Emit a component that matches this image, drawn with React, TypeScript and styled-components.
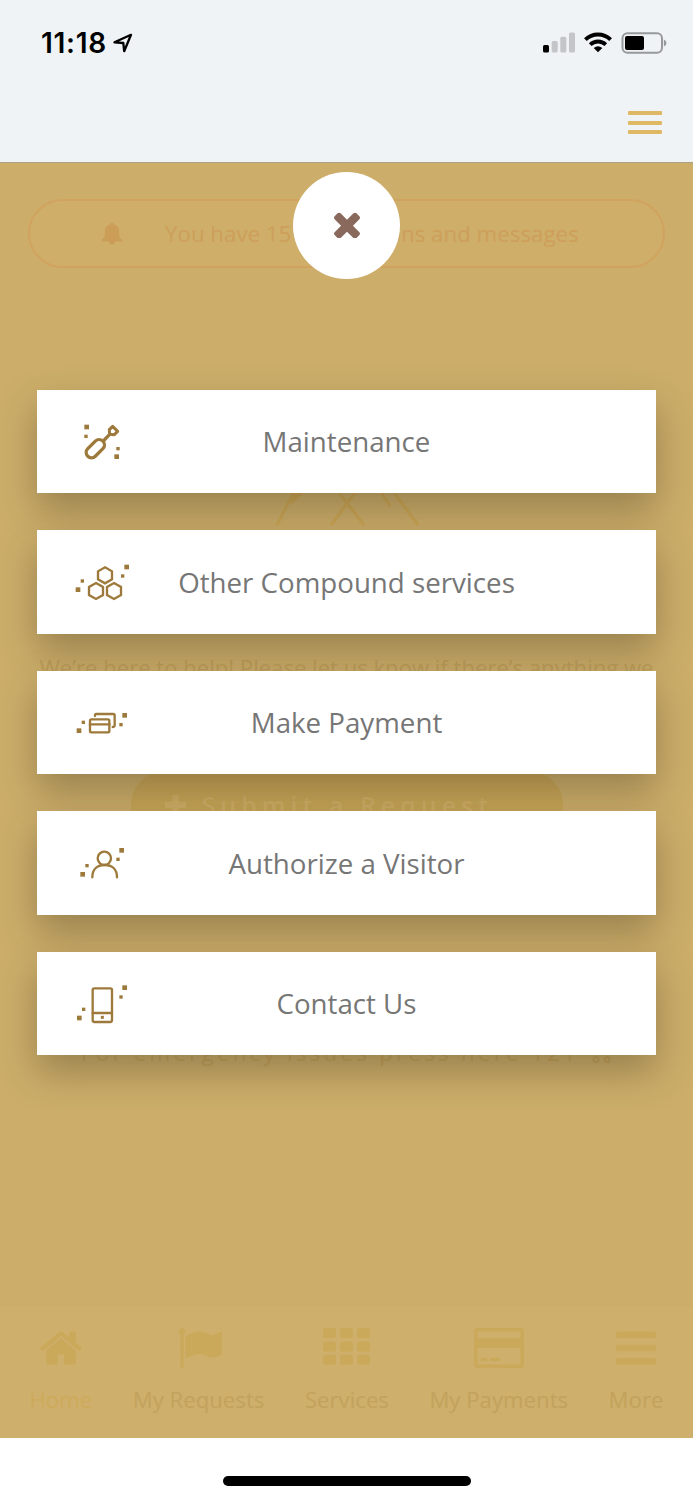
import React from "react";
import styled, { createGlobalStyle } from "styled-components";

const GlobalStyle = createGlobalStyle`
  * { box-sizing: border-box; }
  body { margin: 0; background: #fff; }
`;

const sans = `"Open Sans", "Noto Sans", sans-serif`;

const Screen = styled.div`
  width: 693px;
  height: 1500px;
  display: flex;
  flex-direction: column;
  overflow: hidden;
  background: #fff;
  font-family: ${sans};
`;

const Header = styled.header`
  height: 163px;
  flex: none;
  display: flex;
  flex-direction: column;
  background: #eff3f6;
  border-bottom: 1px solid #aca084;
`;

const StatusBar = styled.div`
  height: 84px;
  display: flex;
  align-items: center;
  padding: 1px 26px 0 41px;
`;

const Clock = styled.span`
  font: 600 28px/34px Inter, sans-serif;
  color: #000;
  letter-spacing: 0.7px;
  margin-right: 6px;
`;

const StatusIcons = styled.div`
  margin-left: auto;
  display: flex;
  align-items: center;
  gap: 9px;
`;

const MenuButton = styled.button`
  align-self: flex-end;
  margin: 27px 31px 0 0;
  padding: 0;
  width: 34px;
  height: 23px;
  border: 0;
  background: none;
  display: flex;
  flex-direction: column;
  justify-content: space-between;
`;

const MenuLine = styled.span`
  height: 4px;
  border-radius: 1px;
  background: #dfb863;
`;

const Stage = styled.main`
  flex: none;
  height: 1275px;
  display: grid;
  background: #ccae6a;
`;

const Layer = styled.div`
  grid-area: 1 / 1;
  min-width: 0;
  display: flex;
  flex-direction: column;
  align-items: center;
`;

const MenuLayer = styled(Layer)`
  z-index: 1;
  padding-top: 9px;
`;

const Notice = styled.div`
  margin-top: 36px;
  width: 637px;
  height: 69px;
  flex: none;
  display: flex;
  align-items: center;
  padding-left: 71px;
  border: 2px solid #d1a35e;
  border-radius: 35px;
  background: #ceae69;
  color: #cd9f5a;
  font-size: 22.3px;
  white-space: nowrap;
`;

const NoticeText = styled.span`
  margin-left: 42px;
`;

const Emblem = styled.svg`
  margin-top: 222px;
  flex: none;
`;

const HelpText = styled.p`
  margin: 126px 0 0;
  line-height: 30px;
  font-size: 22.1px;
  white-space: nowrap;
  color: #bf9f5a;
`;

const RequestButton = styled.div`
  margin-top: 89px;
  width: 432px;
  height: 68px;
  flex: none;
  display: flex;
  align-items: center;
  padding-left: 34px;
  gap: 16px;
  border-radius: 34px;
  background: #c8a657;
  color: #d0af66;
  font-size: 25px;
  font-weight: 600;
  letter-spacing: 5px;
  white-space: nowrap;
`;

const Emergency = styled.div`
  width: 531px;
  margin-top: 198px;
  height: 32px;
  display: flex;
  align-items: center;
  justify-content: space-between;
  line-height: 32px;
  font-size: 22.2px;
  letter-spacing: 3.3px;
  white-space: nowrap;
  color: #c3a158;
`;

const TabBar = styled.nav`
  margin-top: auto;
  width: 100%;
  height: 131px;
  flex: none;
  display: flex;
  justify-content: space-between;
  padding: 18px 29.5px 0;
  background: #ceaf6b;
`;

const Tab = styled.div<{ $active?: boolean }>`
  display: flex;
  flex-direction: column;
  align-items: center;
  font-size: 22.2px;
  line-height: 30px;
  white-space: nowrap;
  color: ${(p) => (p.$active ? "#cdab5b" : "#c3a25d")};
`;

const TabIcon = styled.svg`
  height: 46px;
  margin-bottom: 14px;
  fill: #cba95b;
`;

const CloseButton = styled.button`
  width: 107px;
  height: 107px;
  flex: none;
  padding: 0 0 1px;
  display: flex;
  align-items: center;
  justify-content: center;
  border: 0;
  border-radius: 50%;
  background: #fff;
`;

const Options = styled.div`
  margin-top: 111px;
  width: 619px;
  display: flex;
  flex-direction: column;
  gap: 37.2px;
`;

const Option = styled.div`
  height: 103.3px;
  display: grid;
  grid-template-columns: 132px 1fr 132px;
  align-items: center;
  background: #fff;
  box-shadow: 0 17px 37px rgba(55, 45, 25, 0.34);
`;

const OptionIcon = styled.svg`
  margin-left: 35px;
  fill: none;
  stroke: #9d7a3b;
  stroke-width: 7;
  stroke-linejoin: round;
  stroke-linecap: round;
`;

const OptionLabel = styled.span`
  text-align: center;
  font-size: 27.7px;
  line-height: 38px;
  padding-bottom: 1px;
  color: #767676;
  white-space: nowrap;
`;

const HomeArea = styled.footer`
  flex: 1;
  display: flex;
  justify-content: center;
  align-items: flex-start;
  padding-top: 38px;
`;

const HomeIndicator = styled.div`
  width: 248px;
  height: 10px;
  border-radius: 5px;
  background: #000;
`;

const Dot = ({ x, y, s = 14 }: { x: number; y: number; s?: number }) => (
  <rect x={x - s / 2} y={y - s / 2} width={s} height={s} fill="#9d7a3b" stroke="none" />
);

const hex = (x: number, y: number) =>
  `M${x} ${y - 24}L${x + 21} ${y - 12}V${y + 12}L${x} ${y + 24}L${x - 21} ${y + 12}V${y - 12}Z`;

const options = [
  {
    label: "Maintenance",
    top: 35,
    art: (
      <>
        <g transform="rotate(45 106 145)" strokeWidth={10}>
          <rect x="90" y="113" width="32" height="64" rx="16" />
        </g>
        <path d="M130 122L149 102" strokeWidth="10" strokeLinecap="butt" />
        <path d="M158 78L173 93L163 103L149 102L148 88Z" strokeWidth="9" />
        <Dot x={80} y={80} />
        <Dot x={78} y={108} s={10} />
        <Dot x={174} y={145} s={10} />
        <Dot x={170} y={169} />
      </>
    ),
  },
  {
    label: "Other Compound services",
    top: 22,
    art: (
      <>
        <path d={hex(135, 92)} strokeLinejoin="miter" />
        <path d={hex(108, 139)} strokeLinejoin="miter" />
        <path d={hex(162, 139)} strokeLinejoin="miter" />
        <Dot x={200} y={67} />
        <Dot x={188} y={94} s={10} />
        <Dot x={67} y={109} s={10} />
        <Dot x={54} y={135} />
      </>
    ),
  },
  {
    label: "Make Payment",
    top: 8,
    art: (
      <>
        <rect x="90" y="87" width="58" height="39" rx="4" />
        <path d="M90 102H148" />
        <path d="M105 77V75Q105 71 109 71H160Q164 71 164 75V105Q164 110 158 110" />
        <Dot x={194} y={75} />
        <Dot x={183} y={103} s={10} />
        <Dot x={70} y={96} s={10} />
        <Dot x={57} y={121} />
      </>
    ),
  },
  {
    label: "Authorize a Visitor",
    top: -5,
    art: (
      <>
        <circle cx="133" cy="71" r="20" />
        <path d="M97 128C97 104 112 91 134 91S171 104 171 128" />
        <Dot x={185} y={47} />
        <Dot x={174} y={74} s={10} />
        <Dot x={81} y={93} s={10} />
        <Dot x={68} y={119} />
      </>
    ),
  },
  {
    label: "Contact Us",
    top: 11,
    art: (
      <>
        <rect x="98" y="54" width="58" height="101" rx="5" />
        <path d="M98 128H156" />
        <Dot x={127} y={141} s={9} />
        <Dot x={194} y={52} />
        <Dot x={183} y={80} s={10} />
        <Dot x={71} y={117} s={10} />
        <Dot x={58} y={143} />
      </>
    ),
  },
];

const tabs = [
  {
    label: "Home",
    active: true,
    width: 46,
    box: "0 0 1792 1792",
    art: (
      <path d="M1472 992v480q0 26-19 45t-45 19h-384v-384h-256v384h-384q-26 0-45-19t-19-45v-480q0-1 .5-3t.5-3l575-474 575 474q1 2 1 6zm223-69l-62 74q-8 9-21 11h-3q-13 0-21-7l-692-577-692 577q-12 8-24 7-13-2-21-11l-62-74q-8-10-7-23.5t11-21.5l719-599q32-26 76-26t76 26l244 204v-195q0-14 9-23t23-9h192q14 0 23 9t9 23v408l219 182q10 8 11 21.5t-7 23.5z" />
    ),
  },
  {
    label: "My Requests",
    width: 46,
    box: "-40 0 1792 1792",
    art: (
      <path d="M320 256q0 72-64 110v1266q0 13-9.5 22.5t-22.5 9.5h-64q-13 0-22.5-9.5t-9.5-22.5v-1266q-64-38-64-110 0-53 37.5-90.5t90.5-37.5 90.5 37.5 37.5 90.5zm1472 64v763q0 25-12.5 38.5t-39.5 27.5q-215 116-369 116-61 0-123.5-22t-108.5-48-115.5-48-142.5-22q-192 0-464 146-17 9-33 9-26 0-45-19t-19-45v-742q0-32 31-55 21-14 79-43 236-120 421-120 107 0 200 29t219 88q38 19 88 19 54 0 117.5-21t110-47 88-47 54.5-21q26 0 45 19t19 45z" />
    ),
  },
  {
    label: "Services",
    width: 47,
    box: "0 0 47 46",
    art: (
      <>
        {[3, 16.5, 29.7].map((y) =>
          [0, 17, 34].map((x) => <rect key={`${x}-${y}`} x={x} y={y} width="13" height="10" rx="2.5" />)
        )}
      </>
    ),
  },
  {
    label: "My Payments",
    width: 50,
    box: "0 0 50 46",
    art: (
      <>
        <path
          fillRule="evenodd"
          d="M4 3H46Q50 3 50 7V39Q50 43 46 43H4Q0 43 0 39V7Q0 3 4 3ZM3.500 6.500V13H46.500V6.500ZM3.500 23V39.500H46.500V23Z"
        />
        <rect x="6.500" y="33" width="6.500" height="3" />
        <rect x="16" y="33" width="10" height="3" />
      </>
    ),
  },
  {
    label: "More",
    width: 40,
    box: "0 0 40 46",
    art: (
      <>
        <rect y="6.500" width="40" height="6.500" rx="1.500" />
        <rect y="19.700" width="40" height="6.500" rx="1.500" />
        <rect y="33" width="40" height="6.500" rx="1.500" />
      </>
    ),
  },
];

export default function App() {
  return (
    <Screen>
      <GlobalStyle />
      <Header>
        <StatusBar>
          <Clock>11:18</Clock>
          <svg width="20" height="20" viewBox="0 0 20 20" fill="none" stroke="#000" strokeWidth="2.300" strokeLinejoin="round">
            <path d="M18 1.800L1.500 9.300L10.300 10L11.200 18.200Z" />
          </svg>
          <StatusIcons>
            <svg width="33" height="21" viewBox="0 0 33 21" fill="#c3c5c6">
              <rect x="1" y="13" width="6" height="7.500" rx="1.500" fill="#000" />
              <rect x="9.700" y="9" width="6" height="11.500" rx="1.500" />
              <rect x="18.300" y="4.700" width="6" height="15.800" rx="1.500" />
              <rect x="27" y="0.500" width="6" height="20" rx="1.500" />
            </svg>
            <svg width="28" height="21" viewBox="0 0 28 21" fill="none" stroke="#000" strokeWidth="3.900">
              <path d="M1.400 7.600C8.400 0.700 19.600 0.700 26.600 7.600" />
              <path d="M6.200 12.600C10.700 8.500 17.300 8.500 21.800 12.600" />
              <path d="M14 20.300L9.700 16.100Q14 12.600 18.300 16.100Z" fill="#000" stroke="none" />
            </svg>
            <svg width="46" height="22" viewBox="0 0 46 22">
              <rect x="1.500" y="1.200" width="39.500" height="19.600" rx="5" fill="none" stroke="#97999b" strokeWidth="2" />
              <rect x="4" y="4" width="19" height="14" rx="2" fill="#000" />
              <path d="M42.900 7.500Q45.500 8.500 45.500 11T42.900 14.500Z" fill="#97999b" />
            </svg>
          </StatusIcons>
        </StatusBar>
        <MenuButton aria-label="Menu">
          <MenuLine />
          <MenuLine />
          <MenuLine />
        </MenuButton>
      </Header>
      <Stage>
        <Layer>
          <Notice>
            <svg width="22" height="23" viewBox="0 0 22 23" fill="#cc9d57">
              <path d="M11 0.500Q12.500 0.500 12.500 2.200C16.500 3 18 6 18 9C18 14 18.700 16 21.500 18.300Q21.500 19.500 20 19.500H14Q14 22.500 11 22.500T8 19.500H2Q0.500 19.500 0.500 18.300C3.300 16 4 14 4 9C4 6 5.500 3 9.500 2.200Q9.500 0.500 11 0.500Z" />
            </svg>
            <NoticeText>You have 15 notifications and messages</NoticeText>
          </Notice>
          <Emblem width="150" height="36" viewBox="272 490 150 36" fill="none" stroke="#cca653" strokeWidth="3">
            <path d="M295 490L277 525M337 490L364 525M357 490L331 525M392 490L418 525M380 490L390 506" />
            <path d="M291 505V490H307Z" fill="#cca653" stroke="none" />
          </Emblem>
          <HelpText>We’re here to help! Please let us know if there’s anything we</HelpText>
          <RequestButton>
            <svg width="21" height="20" viewBox="0 0 21 20" fill="#d0af66">
              <path d="M7.500 0H13.500V7H21V13H13.500V20H7.500V13H0V7H7.500Z" />
            </svg>
            Submit a Request
          </RequestButton>
          <Emergency>
            For emergency issues press here 121
            <svg width="24" height="24" viewBox="0 0 24 24" fill="none" stroke="#c3a158" strokeWidth="2">
              <path d="M1 0H4L7 13H21L24 3H5" />
              <circle cx="8" cy="18.500" r="2.500" />
              <circle cx="19" cy="18.500" r="2.500" />
            </svg>
          </Emergency>
          <TabBar>
            {tabs.map((tab) => (
              <Tab key={tab.label} $active={tab.active}>
                <TabIcon width={tab.width} viewBox={tab.box}>
                  {tab.art}
                </TabIcon>
                {tab.label}
              </Tab>
            ))}
          </TabBar>
        </Layer>
        <MenuLayer>
          <CloseButton aria-label="Close">
            <svg width="26" height="26" viewBox="302 334 1188 1188" fill="#8a695d">
              <path d="M1490 1322q0 40-28 68l-136 136q-28 28-68 28t-68-28l-294-294-294 294q-28 28-68 28t-68-28l-136-136q-28-28-28-68t28-68l294-294-294-294q-28-28-28-68t28-68l136-136q28-28 68-28t68 28l294 294 294-294q28-28 68-28t68 28l136 136q28 28 28 68t-28 68l-294 294 294 294q28 28 28 68z" />
            </svg>
          </CloseButton>
          <Options>
            {options.map((option) => (
              <Option key={option.label}>
                <OptionIcon width="64" height="60" viewBox={`36 ${option.top} 192 180`}>
                  {option.art}
                </OptionIcon>
                <OptionLabel>{option.label}</OptionLabel>
              </Option>
            ))}
          </Options>
        </MenuLayer>
      </Stage>
      <HomeArea>
        <HomeIndicator />
      </HomeArea>
    </Screen>
  );
}
